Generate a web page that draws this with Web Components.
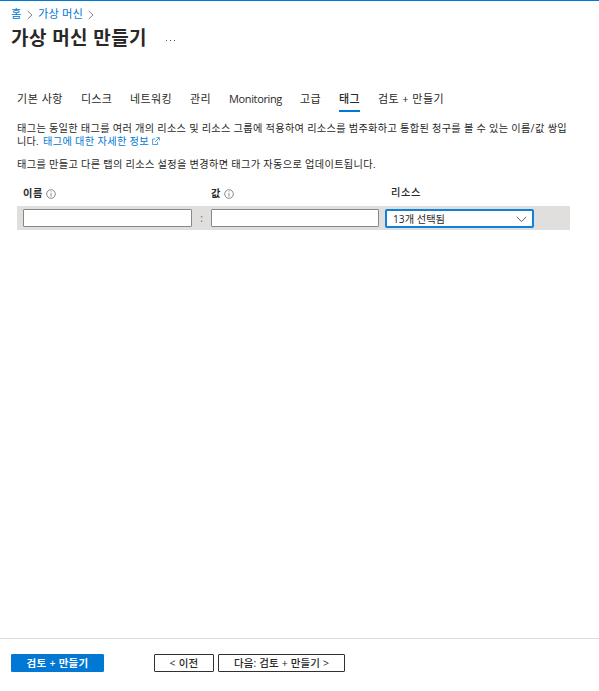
<!DOCTYPE html>
<html lang="ko">
<head>
<meta charset="utf-8">
<title>가상 머신 만들기</title>
<style>
html,body{margin:0;height:100%;background:#fff}
body{font-family:"Open Sans","Noto Sans CJK KR",sans-serif;color:#292827;overflow:hidden}
</style>
</head>
<body>
<vm-page></vm-page>
<script>
const define = (name, html, init) => {
  const t = document.createElement('template');
  t.innerHTML = html;
  customElements.define(name, class extends HTMLElement {
    constructor() {
      super();
      this.attachShadow({mode: 'open'}).append(t.content.cloneNode(true));
    }
    connectedCallback() { if (init) init(this, this.shadowRoot); }
  });
};

/* Single line of text whose tracking is adjusted to fill the width "w". */
define('fit-text', `<style>:host{display:block;flex:none;white-space:nowrap}span{display:inline-block;white-space:pre}</style><span></span>`, (el, root) => {
  const s = root.querySelector('span'), w = +el.getAttribute('w');
  s.textContent = el.getAttribute('text');
  el.style.width = w + 'px';
  const n = s.textContent.length;
  const gap = (w - s.getBoundingClientRect().width) / n;
  s.style.letterSpacing = gap.toFixed(3) + 'px';
});

define('crumb-arrow', `<style>:host{display:block;width:6px;height:10px;flex:none}svg{display:block}</style>
<svg width="6" height="10" viewBox="0 0 6 10" fill="none" stroke="#8a8886" stroke-width="1"><path d="M.7 1 5 5 .7 9"/></svg>`);

define('info-icon', `<style>:host{display:block;width:10px;height:10px;flex:none}svg{display:block}</style>
<svg width="10" height="10" viewBox="0 0 10 10" fill="none" stroke="#6b6967" stroke-width=".8"><circle cx="5" cy="5" r="4.3"/><path d="M5 4.2V7.5M5 2.4V3.3"/></svg>`);

define('external-icon', `<style>:host{display:block;width:8px;height:8px;flex:none}svg{display:block}</style>
<svg width="8" height="8" viewBox="0 0 8 8" fill="none" stroke="#2b86d6" stroke-width=".8"><path d="M3.3 2H.6V7.5H5.6V4.8M3 5 7 1M4.5.6H7.4V3.5"/></svg>`);

define('bread-crumb', `<style>:host{display:flex;align-items:center;height:16px;padding:5px 0 0 11px;font-size:11.3px;line-height:16px;color:#0078d4}
crumb-arrow{margin:1px 5px 0 5px}</style>
<fit-text w="11" text="홈"></fit-text><crumb-arrow></crumb-arrow><fit-text w="45" text="가상 머신"></fit-text><crumb-arrow></crumb-arrow>`);

define('page-title', `<style>:host{display:flex;height:30px;padding:1px 0 0 11px;align-items:center;font-size:19px;font-weight:700;line-height:30px}
svg{display:block;margin:5px 0 0 19px}</style>
<fit-text w="136" text="가상 머신 만들기"></fit-text>
<svg width="10" height="2" viewBox="0 0 10 2" fill="#55534f"><path d="M0 0h1v1H0zM4 0h1v1H4zM8 0h1v1H8z"/></svg>`);

define('tab-item', `<style>:host{display:block;box-sizing:border-box;height:22px;line-height:18px;font-size:11px;border-bottom:2px solid transparent;flex:none}
:host([active]){border-color:#0078d4;font-weight:500}</style><slot></slot>`);

define('tab-strip', `<style>:host{display:flex;padding-left:17px;margin-top:37px;gap:18px}</style>
<tab-item><fit-text w="46" text="기본 사항"></fit-text></tab-item>
<tab-item><fit-text w="31" text="디스크"></fit-text></tab-item>
<tab-item><fit-text w="42" text="네트워킹"></fit-text></tab-item>
<tab-item><fit-text w="21" text="관리"></fit-text></tab-item>
<tab-item><fit-text w="53" text="Monitoring"></fit-text></tab-item>
<tab-item><fit-text w="21" text="고급"></fit-text></tab-item>
<tab-item active><fit-text w="21" text="태그"></fit-text></tab-item>
<tab-item><fit-text w="66" text="검토 + 만들기"></fit-text></tab-item>`);

define('tag-intro', `<style>:host{display:block;padding:10px 0 0 17px;font-family:Roboto,"Noto Sans CJK KR",sans-serif;font-size:10.2px;line-height:13px}
.l{display:flex;align-items:center}.a{color:#0078d4;margin-left:4px}external-icon{margin:0 0 1px 3px}.p{margin-top:10px}</style>
<fit-text w="550" text="태그는 동일한 태그를 여러 개의 리소스 및 리소스 그룹에 적용하여 리소스를 범주화하고 통합된 청구를 볼 수 있는 이름/값 쌍입"></fit-text>
<div class="l"><fit-text w="22" text="니다."></fit-text><fit-text class="a" w="106" text="태그에 대한 자세한 정보"></fit-text><external-icon></external-icon></div>
<fit-text class="p" w="359" text="태그를 만들고 다른 탭의 리소스 설정을 변경하면 태그가 자동으로 업데이트됩니다."></fit-text>`);

define('text-field', `<style>:host{display:block;box-sizing:border-box;height:18px;background:#fff;border:1px solid #8a8886;border-radius:1px;flex:none}</style>`);

define('select-field', `<style>:host{display:flex;box-sizing:border-box;width:149px;height:19px;border:2px solid #1080d8;border-radius:2px;background:#fff;align-items:center;justify-content:space-between;padding:1px 5px 0 6px;font-size:10.2px;line-height:14px;flex:none}svg{display:block}</style>
<fit-text w="52" text="13개 선택됨"></fit-text>
<svg width="11" height="7" viewBox="0 0 11 7" fill="none" stroke="#605e5c"><path d="M.7.8 5.5 5.6 10.3.8"/></svg>`);

define('tag-table', `<style>:host{display:block;margin:14px 29px 0 17px;font-size:10.2px;line-height:14px}
.h,.r{display:grid;grid-template-columns:169px 19px 168px 6px 149px}
.h{padding-left:6px;height:21px;font-weight:600}
.c{display:flex;align-items:center;height:16px}.c info-icon{margin:1px 0 0 3px}
.res{padding-left:6px;height:14px;font-weight:500}
.r{background:#e1dfdd;box-sizing:border-box;height:24px;padding:3px 0 0 6px}
.s{text-align:center;line-height:18px;color:#605e5c}</style>
<div class="h"><div class="c"><fit-text w="20" text="이름"></fit-text><info-icon></info-icon></div><i></i><div class="c"><fit-text w="10" text="값"></fit-text><info-icon></info-icon></div><i></i><div class="c res"><fit-text w="30" text="리소스"></fit-text></div></div>
<div class="r"><text-field></text-field><div class="s">:</div><text-field></text-field><i></i><select-field></select-field></div>`);

define('action-button', `<style>:host{display:flex;box-sizing:border-box;height:18px;border:1px solid #323130;border-radius:1px;align-items:center;justify-content:center;font-size:10.5px;line-height:16px;font-weight:500;flex:none}
:host([primary]){background:#0078d4;border-color:#0078d4;color:#fff;font-weight:600}</style><slot></slot>`);

define('page-footer', `<style>:host{display:flex;box-sizing:border-box;height:53px;border-top:1px solid #dddcdb;padding:15px 0 0 11px}
.a{width:93px}.b{width:60px;margin-left:50px}.c{width:127px;margin-left:4px}</style>
<action-button class="a" primary><fit-text w="62" text="검토 + 만들기"></fit-text></action-button>
<action-button class="b"><fit-text w="29" text="&lt; 이전"></fit-text></action-button>
<action-button class="c"><fit-text w="95" text="다음: 검토 + 만들기 &gt;"></fit-text></action-button>`);

define('vm-page', `<style>:host{display:flex;flex-direction:column;box-sizing:border-box;width:599px;height:691px;border-top:1px solid #0078d4}main{flex:1}</style>
<bread-crumb></bread-crumb><page-title></page-title>
<main><tab-strip></tab-strip><tag-intro></tag-intro><tag-table></tag-table></main>
<page-footer></page-footer>`);
</script>
</body>
</html>
